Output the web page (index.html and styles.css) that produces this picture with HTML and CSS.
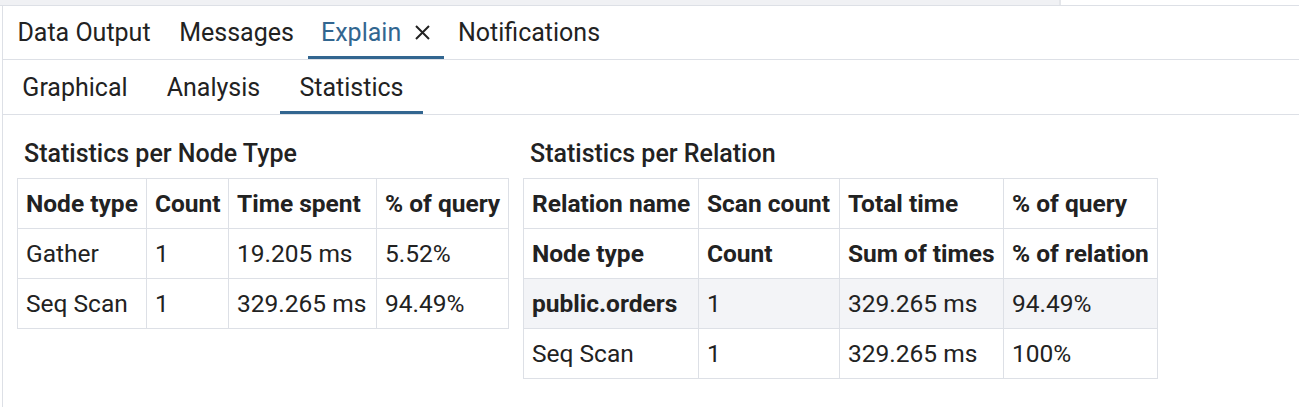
FILE: index.html
```html
<!DOCTYPE html>
<html>
<head>
<meta charset="utf-8">
<link rel="stylesheet" href="styles.css">
</head>
<body>
<div class="topstrip"><div class="topleft"></div><div class="topright"></div></div>
<div class="panel">
  <div class="tabs main-tabs">
    <div class="tab t-data">Data Output</div>
    <div class="tab t-msg">Messages</div>
    <div class="tab t-explain active">Explain <svg class="close" width="17" height="17" viewBox="0 0 17 17"><path d="M2 2 L15 15 M15 2 L2 15" stroke="#222" stroke-width="2" fill="none"/></svg></div>
    <div class="tab t-notif">Notifications</div>
  </div>
  <div class="tabs sub-tabs">
    <div class="tab s-graph">Graphical</div>
    <div class="tab s-analysis">Analysis</div>
    <div class="tab s-stats active">Statistics</div>
  </div>
  <div class="content">
    <div class="block">
      <div class="heading">Statistics per Node Type</div>
      <table class="stats node-table">
        <colgroup><col class="c1"><col class="c2"><col class="c3"><col class="c4"></colgroup>
        <tr class="head"><th>Node type</th><th>Count</th><th>Time spent</th><th>% of query</th></tr>
        <tr><td>Gather</td><td>1</td><td>19.205 ms</td><td>5.52%</td></tr>
        <tr><td>Seq Scan</td><td>1</td><td>329.265 ms</td><td>94.49%</td></tr>
      </table>
    </div>
    <div class="block">
      <div class="heading">Statistics per Relation</div>
      <table class="stats rel-table">
        <colgroup><col class="c1"><col class="c2"><col class="c3"><col class="c4"></colgroup>
        <tr class="head"><th>Relation name</th><th>Scan count</th><th>Total time</th><th>% of query</th></tr>
        <tr class="head"><th>Node type</th><th>Count</th><th>Sum of times</th><th>% of relation</th></tr>
        <tr class="rel"><td class="relname">public.orders</td><td>1</td><td>329.265 ms</td><td>94.49%</td></tr>
        <tr><td>Seq Scan</td><td>1</td><td>329.265 ms</td><td>100%</td></tr>
      </table>
    </div>
  </div>
</div>
</body>
</html>
```
FILE: styles.css
```css
html, body {
  margin: 0;
  padding: 0;
  background: #ffffff;
  font-family: Roboto, "Liberation Sans", sans-serif;
  color: #222222;
}
.topstrip {
  display: flex;
  height: 5px;
  border-bottom: 1px solid #dde0e6;
}
.topleft {
  width: 1059px;
  background: #f0f1f4;
  border-right: 2px solid #e4e6ea;
}
.topright {
  flex: 1;
  background: #ffffff;
}
.panel {
  margin-left: 2px;
  border-left: 1px solid #dde0e6;
  height: 401px;
}
.tabs {
  display: flex;
  align-items: stretch;
  border-bottom: 1px solid #dde0e6;
}
.tab {
  display: flex;
  align-items: center;
  justify-content: center;
  box-sizing: border-box;
  white-space: nowrap;
  border-bottom: 3px solid transparent;
}
.main-tabs { height: 53px; font-size: 25px; }
.main-tabs .tab { padding-top: 2px; }
.t-data { width: 162px; }
.t-msg { width: 143px; }
.t-explain { width: 136px; justify-content: flex-start; padding-left: 13px; }
.t-notif { width: 170px; }
.tab.active { border-bottom-color: #326690; }
.t-explain.active { color: #326690; }
.close { margin-left: 13px; }
.sub-tabs { height: 54px; font-size: 25px; }
.sub-tabs .tab { padding-top: 4px; }
.s-graph { width: 144px; }
.s-analysis { width: 133px; }
.s-stats { width: 143px; }
.content {
  display: flex;
  gap: 14px;
  padding: 20px 0 0 14px;
  align-items: flex-start;
}
.heading {
  font-size: 25px;
  font-weight: 500;
  padding-left: 7px;
  height: 43px;
  line-height: 38px;
}
table.stats {
  border-collapse: collapse;
  table-layout: fixed;
  font-size: 24.5px;
}
table.stats th, table.stats td {
  border: 1px solid #dde0e6;
  height: 50px;
  padding: 0 8px;
  text-align: left;
  white-space: nowrap;
  box-sizing: border-box;
}
table.stats th { font-weight: 700; }
.node-table { width: 491px; }
.node-table .c1 { width: 129px; }
.node-table .c2 { width: 82px; }
.node-table .c3 { width: 148px; }
.node-table .c4 { width: 132px; }
.rel-table { width: 634px; }
.rel-table .c1 { width: 175px; }
.rel-table .c2 { width: 141px; }
.rel-table .c3 { width: 164px; }
.rel-table .c4 { width: 154px; }
tr.rel td { background: #f3f4f7; }
td.relname { font-weight: 700; }
```
